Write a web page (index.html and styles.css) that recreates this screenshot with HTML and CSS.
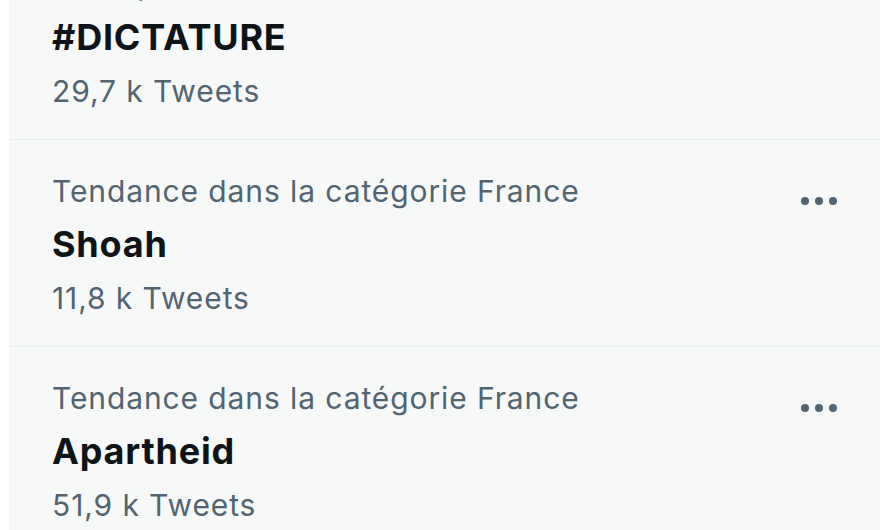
FILE: index.html
```html
<!DOCTYPE html>
<html lang="fr">
<head>
<meta charset="utf-8">
<title>Tendances</title>
<link rel="stylesheet" href="styles.css">
</head>
<body>
<div class="page">
  <div class="gutter"></div>
  <section class="trends">
    <div class="trend trend-first">
      <div class="trend-body">
        <div class="trend-meta">Politique · Tendances</div>
        <div class="trend-name">#DICTATURE</div>
        <div class="trend-count">29,7 k Tweets</div>
      </div>
      <div class="trend-more">
        <svg viewBox="0 0 36 10" width="36" height="10" aria-hidden="true"><circle cx="4" cy="5" r="4"/><circle cx="18" cy="5" r="4"/><circle cx="32" cy="5" r="4"/></svg>
      </div>
    </div>
    <div class="trend">
      <div class="trend-body">
        <div class="trend-meta">Tendance dans la catégorie France</div>
        <div class="trend-name">Shoah</div>
        <div class="trend-count">11,8 k Tweets</div>
      </div>
      <div class="trend-more">
        <svg viewBox="0 0 36 10" width="36" height="10" aria-hidden="true"><circle cx="4" cy="5" r="4"/><circle cx="18" cy="5" r="4"/><circle cx="32" cy="5" r="4"/></svg>
      </div>
    </div>
    <div class="trend">
      <div class="trend-body">
        <div class="trend-meta">Tendance dans la catégorie France</div>
        <div class="trend-name">Apartheid</div>
        <div class="trend-count">51,9 k Tweets</div>
      </div>
      <div class="trend-more">
        <svg viewBox="0 0 36 10" width="36" height="10" aria-hidden="true"><circle cx="4" cy="5" r="4"/><circle cx="18" cy="5" r="4"/><circle cx="32" cy="5" r="4"/></svg>
      </div>
    </div>
  </section>
</div>
</body>
</html>
```

FILE: styles.css
```css
html, body {
  margin: 0;
  padding: 0;
  background: #ffffff;
}

body {
  width: 880px;
  height: 530px;
  overflow: hidden;
  font-family: Inter, "Liberation Sans", Arial, sans-serif;
}

.page {
  display: flex;
  height: 530px;
}

.gutter {
  width: 9px;
  flex: none;
  background: #ffffff;
}

.trends {
  flex: 1;
  background: #f7f9f9;
  display: flex;
  flex-direction: column;
}

.trend {
  display: flex;
  align-items: flex-start;
  padding: 26px 43px 21px 43px;
  border-top: 1px solid #eaeef0;
}

.trend-first {
  margin-top: -67px;
  border-top: none;
}

.trend-body {
  flex: 1;
  display: flex;
  flex-direction: column;
}

.trend-meta {
  font-size: 30px;
  line-height: 51px;
  letter-spacing: 0.9px;
  color: #536471;
}

.trend-name {
  font-size: 36px;
  line-height: 54px;
  letter-spacing: 0.8px;
  font-weight: 700;
  color: #0f1419;
}

.trend-count {
  margin-top: 0;
  font-size: 30px;
  line-height: 54px;
  letter-spacing: 0.9px;
  color: #536471;
}

.trend-more {
  flex: none;
  margin-top: 30px;
  display: flex;
}

.trend-more svg {
  fill: #536471;
  display: block;
}
```
